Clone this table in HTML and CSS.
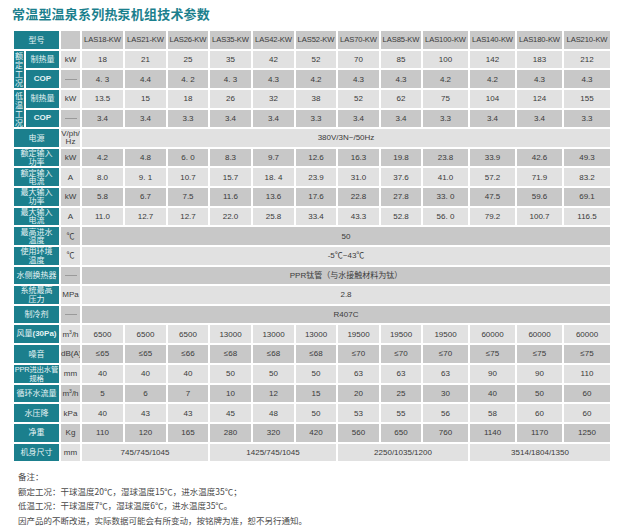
FILE: index.html
```html
<!DOCTYPE html>
<html lang="zh">
<head>
<meta charset="utf-8">
<title>常温型温泉系列热泵机组技术参数</title>
<link rel="stylesheet" href="styles.css">
</head>
<body>
<h1 class="title">常温型温泉系列热泵机组技术参数</h1>
<table class="spec">
<colgroup>
<col class="c-v"><col class="c-l"><col class="c-u">
<col class="c-a"><col class="c-a"><col class="c-b"><col class="c-a"><col class="c-a"><col class="c-b"><col class="c-a"><col class="c-b">
<col class="c-w"><col class="c-w"><col class="c-w"><col class="c-x">
</colgroup>
<tr class="dk hd">
<td class="lab" colspan="2">型号</td><td class="unit"></td>
<td>LAS18-KW</td><td>LAS21-KW</td><td>LAS26-KW</td><td>LAS35-KW</td><td>LAS42-KW</td><td>LAS52-KW</td><td>LAS70-KW</td><td>LAS85-KW</td><td>LAS100-KW</td><td>LAS140-KW</td><td>LAS180-KW</td><td>LAS210-KW</td>
</tr>
<tr class="lt">
<td class="lab vert" rowspan="2">额定工况</td><td class="lab">制热量</td><td class="unit">kW</td>
<td>18</td><td>21</td><td>25</td><td>35</td><td>42</td><td>52</td><td>70</td><td>85</td><td>100</td><td>142</td><td>183</td><td>212</td>
</tr>
<tr class="dk">
<td class="lab en">COP</td><td class="unit"><span class="dash"></span></td>
<td>4. 3</td><td>4.4</td><td>4. 2</td><td>4. 3</td><td>4.3</td><td>4.2</td><td>4.3</td><td>4.3</td><td>4.2</td><td>4.2</td><td>4.3</td><td>4.3</td>
</tr>
<tr class="lt">
<td class="lab vert" rowspan="2">低温工况</td><td class="lab">制热量</td><td class="unit">kW</td>
<td>13.5</td><td>15</td><td>18</td><td>26</td><td>32</td><td>38</td><td>52</td><td>62</td><td>75</td><td>104</td><td>124</td><td>155</td>
</tr>
<tr class="dk">
<td class="lab en">COP</td><td class="unit"><span class="dash"></span></td>
<td>3.4</td><td>3.4</td><td>3.3</td><td>3.4</td><td>3.4</td><td>3.3</td><td>3.4</td><td>3.4</td><td>3.3</td><td>3.4</td><td>3.4</td><td>3.3</td>
</tr>
<tr class="lt">
<td class="lab" colspan="2">电源</td><td class="unit tight">V/ph/<br>Hz</td>
<td colspan="12">380V/3N~/50Hz</td>
</tr>
<tr class="dk">
<td class="lab" colspan="2">额定输入<br>功率</td><td class="unit">kW</td>
<td>4.2</td><td>4.8</td><td>6. 0</td><td>8.3</td><td>9.7</td><td>12.6</td><td>16.3</td><td>19.8</td><td>23.8</td><td>33.9</td><td>42.6</td><td>49.3</td>
</tr>
<tr class="lt">
<td class="lab" colspan="2">额定输入<br>电流</td><td class="unit">A</td>
<td>8.0</td><td>9. 1</td><td>10.7</td><td>15.7</td><td>18. 4</td><td>23.9</td><td>31.0</td><td>37.6</td><td>41.0</td><td>57.2</td><td>71.9</td><td>83.2</td>
</tr>
<tr class="dk">
<td class="lab" colspan="2">最大输入<br>功率</td><td class="unit">kW</td>
<td>5.8</td><td>6.7</td><td>7.5</td><td>11.6</td><td>13.6</td><td>17.6</td><td>22.8</td><td>27.8</td><td>33. 0</td><td>47.5</td><td>59.6</td><td>69.1</td>
</tr>
<tr class="lt">
<td class="lab" colspan="2">最大输入<br>电流</td><td class="unit">A</td>
<td>11.0</td><td>12.7</td><td>12.7</td><td>22.0</td><td>25.8</td><td>33.4</td><td>43.3</td><td>52.8</td><td>56. 0</td><td>79.2</td><td>100.7</td><td>116.5</td>
</tr>
<tr class="dk">
<td class="lab" colspan="2">最高进水<br>温度</td><td class="unit">℃</td>
<td colspan="12">50</td>
</tr>
<tr class="lt">
<td class="lab" colspan="2">使用环境<br>温度</td><td class="unit">℃</td>
<td colspan="12">-5℃~43℃</td>
</tr>
<tr class="dk">
<td class="lab" colspan="2">水侧换热器</td><td class="unit"><span class="dash"></span></td>
<td colspan="12">PPR钛管（与水接触材料为钛）</td>
</tr>
<tr class="lt">
<td class="lab" colspan="2">系统最高<br>压力</td><td class="unit">MPa</td>
<td colspan="12">2.8</td>
</tr>
<tr class="dk">
<td class="lab" colspan="2">制冷剂</td><td class="unit"><span class="dash"></span></td>
<td colspan="12">R407C</td>
</tr>
<tr class="lt">
<td class="lab" colspan="2">风量<span class="en">(30Pa)</span></td><td class="unit">m<sup>3</sup>/h</td>
<td>6500</td><td>6500</td><td>6500</td><td>13000</td><td>13000</td><td>13000</td><td>19500</td><td>19500</td><td>19500</td><td>60000</td><td>60000</td><td>60000</td>
</tr>
<tr class="dk">
<td class="lab" colspan="2">噪音</td><td class="unit">dB(A)</td>
<td>≤65</td><td>≤65</td><td>≤66</td><td>≤68</td><td>≤68</td><td>≤68</td><td>≤70</td><td>≤70</td><td>≤70</td><td>≤75</td><td>≤75</td><td>≤75</td>
</tr>
<tr class="lt">
<td class="lab small" colspan="2"><span class="en-n">PPR</span>进出水管<br>规格</td><td class="unit">mm</td>
<td>40</td><td>40</td><td>40</td><td>50</td><td>50</td><td>50</td><td>63</td><td>63</td><td>63</td><td>90</td><td>90</td><td>110</td>
</tr>
<tr class="dk">
<td class="lab" colspan="2">循环水流量</td><td class="unit">m<sup>3</sup>/h</td>
<td>5</td><td>6</td><td>7</td><td>10</td><td>12</td><td>15</td><td>20</td><td>25</td><td>30</td><td>40</td><td>50</td><td>60</td>
</tr>
<tr class="lt">
<td class="lab" colspan="2">水压降</td><td class="unit">kPa</td>
<td>40</td><td>43</td><td>43</td><td>45</td><td>48</td><td>50</td><td>53</td><td>55</td><td>56</td><td>58</td><td>60</td><td>60</td>
</tr>
<tr class="dk">
<td class="lab" colspan="2">净重</td><td class="unit">Kg</td>
<td>110</td><td>120</td><td>165</td><td>280</td><td>320</td><td>420</td><td>560</td><td>650</td><td>760</td><td>1140</td><td>1170</td><td>1250</td>
</tr>
<tr class="lt">
<td class="lab" colspan="2">机身尺寸</td><td class="unit">mm</td>
<td colspan="3">745/745/1045</td><td colspan="3">1425/745/1045</td><td colspan="3">2250/1035/1200</td><td colspan="3">3514/1804/1350</td>
</tr>
</table>
<div class="notes">
<p>备注：</p>
<p>额定工况：干球温度20℃，湿球温度15℃，进水温度35℃；</p>
<p>低温工况：干球温度7℃，湿球温度6℃，进水温度35℃。</p>
<p>因产品的不断改进，实际数据可能会有所变动，按铭牌为准，恕不另行通知。</p>
</div>
</body>
</html>
```
FILE: styles.css
```css
body {
  margin: 0;
  padding: 7px 0 0 12px;
  background: #fff;
  font-family: "Liberation Sans", Arial, "Noto Sans CJK SC", sans-serif;
  color: #3a3a3a;
}

.title {
  margin: 0 0 8px 0;
  font-family: "Noto Sans CJK SC", sans-serif;
  font-size: 13px;
  line-height: 14px;
  font-weight: 700;
  letter-spacing: 0.2px;
  color: #1b7f8d;
}

.spec {
  border-collapse: collapse;
  table-layout: fixed;
  width: 598px;
}

.c-v { width: 12px; }
.c-l { width: 35px; }
.c-u { width: 21px; }
.c-a { width: 43px; }
.c-b { width: 42px; }
.c-w { width: 47px; }
.c-x { width: 48px; }

.spec tr { height: 19.64px; }

.spec td {
  border: 2px solid #fff;
  padding: 0;
  text-align: center;
  vertical-align: middle;
  font-size: 8px;
  line-height: 9px;
  white-space: nowrap;
  overflow: hidden;
}

.spec tr.lt td { background: #e1e1e1; }
.spec tr.dk td { background: #c8c8c8; }

.spec tr.hd td {
  font-size: 7.6px;
  letter-spacing: -0.1px;
}

.spec tr td.lab {
  background: #1b7f8d;
  color: #e6f3f4;
  font-family: "Noto Sans CJK SC", sans-serif;
  font-size: 8px;
  line-height: 8.5px;
  border-color: #fff;
}

.spec tr td.lab.small {
  font-size: 7.4px;
  letter-spacing: -0.2px;
}

.spec tr td.lab.en,
.lab .en {
  font-family: "Liberation Sans", Arial, sans-serif;
  font-weight: 700;
}

.lab .en-n {
  font-family: "Liberation Sans", Arial, sans-serif;
}

.spec tr td.lab.vert {
  white-space: normal;
  word-break: break-all;
  font-size: 8px;
  line-height: 9px;
  padding: 0 1px;
}

.spec td.unit {
  font-size: 8px;
}

.spec td.unit.tight {
  line-height: 8px;
}

.unit sup {
  font-size: 5px;
  line-height: 0;
  vertical-align: 3px;
}

.dash {
  display: inline-block;
  width: 12px;
  height: 1px;
  background: #9a9a9a;
  vertical-align: middle;
}

.notes {
  margin-top: 6px;
  padding-left: 6px;
  font-family: "Noto Sans CJK SC", sans-serif;
  font-size: 8.5px;
  line-height: 14.5px;
  color: #4a4a4a;
}

.notes p {
  margin: 0;
}
```
